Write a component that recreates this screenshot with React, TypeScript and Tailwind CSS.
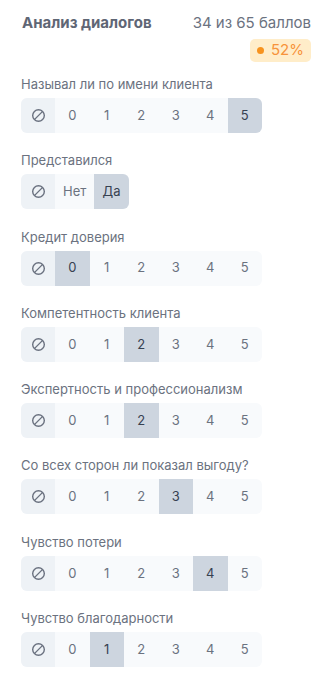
import React from "react";

type Q = { label: string; options: string[]; selected: number };

const questions: Q[] = [
  { label: "Называл ли по имени клиента", options: ["0", "1", "2", "3", "4", "5"], selected: 5 },
  { label: "Представился", options: ["Нет", "Да"], selected: 1 },
  { label: "Кредит доверия", options: ["0", "1", "2", "3", "4", "5"], selected: 0 },
  { label: "Компетентность клиента", options: ["0", "1", "2", "3", "4", "5"], selected: 2 },
  { label: "Экспертность и профессионализм", options: ["0", "1", "2", "3", "4", "5"], selected: 2 },
  { label: "Со всех сторон ли показал выгоду?", options: ["0", "1", "2", "3", "4", "5"], selected: 3 },
  { label: "Чувство потери", options: ["0", "1", "2", "3", "4", "5"], selected: 4 },
  { label: "Чувство благодарности", options: ["0", "1", "2", "3", "4", "5"], selected: 1 },
];

function NoneIcon() {
  return (
    <svg width="15" height="15" viewBox="0 0 16 16" fill="none" stroke="#6b7280" strokeWidth="1.5">
      <circle cx="8" cy="8" r="6.2" />
      <path d="M12.4 3.6 3.6 12.4" />
    </svg>
  );
}

export default function App() {
  return (
    <div
      className="w-[330px] min-h-[684px] bg-white pl-[21px] pr-[19px] pt-[12px]"
      style={{ fontFamily: "Inter, 'Noto Sans', sans-serif" }}
    >
      <div className="flex items-start justify-between">
        <div className="text-[15px] leading-[22px] font-bold text-[#5f6675] pl-[1px]">Анализ диалогов</div>
        <div className="flex flex-col items-end">
          <div className="text-[15px] leading-[22px] text-[#6b7280]">34 из 65 баллов</div>
          <div className="mt-[5px] h-[23px] px-[7px] rounded-[5px] bg-[#ffedc9] flex items-center gap-[7px] text-[15px] text-[#f7933a]">
            <span className="w-[7px] h-[7px] rounded-full bg-[#f7931e]" />
            <span>52%</span>
          </div>
        </div>
      </div>
      <div className="mt-[12px] flex flex-col">
        {questions.map((q, qi) => (
          <div key={qi} className="flex flex-col mb-[17.3px]">
            <div className="text-[13px] leading-[20px] text-[#6b7280]">{q.label}</div>
            <div className="mt-[4px] flex self-start h-[35px] rounded-[6px] overflow-hidden bg-[#f8fafc]">
              <div className="w-[34px] flex items-center justify-center bg-[#eef2f6]">
                <NoneIcon />
              </div>
              {q.options.map((o, oi) => (
                <div
                  key={oi}
                  className={
                    "min-w-[34.5px] px-[8px] flex items-center justify-center text-[13px] " +
                    (oi === q.selected ? "bg-[#cdd5df] text-[#374151]" : "text-[#6b7280]")
                  }
                >
                  {o}
                </div>
              ))}
            </div>
          </div>
        ))}
      </div>
    </div>
  );
}
